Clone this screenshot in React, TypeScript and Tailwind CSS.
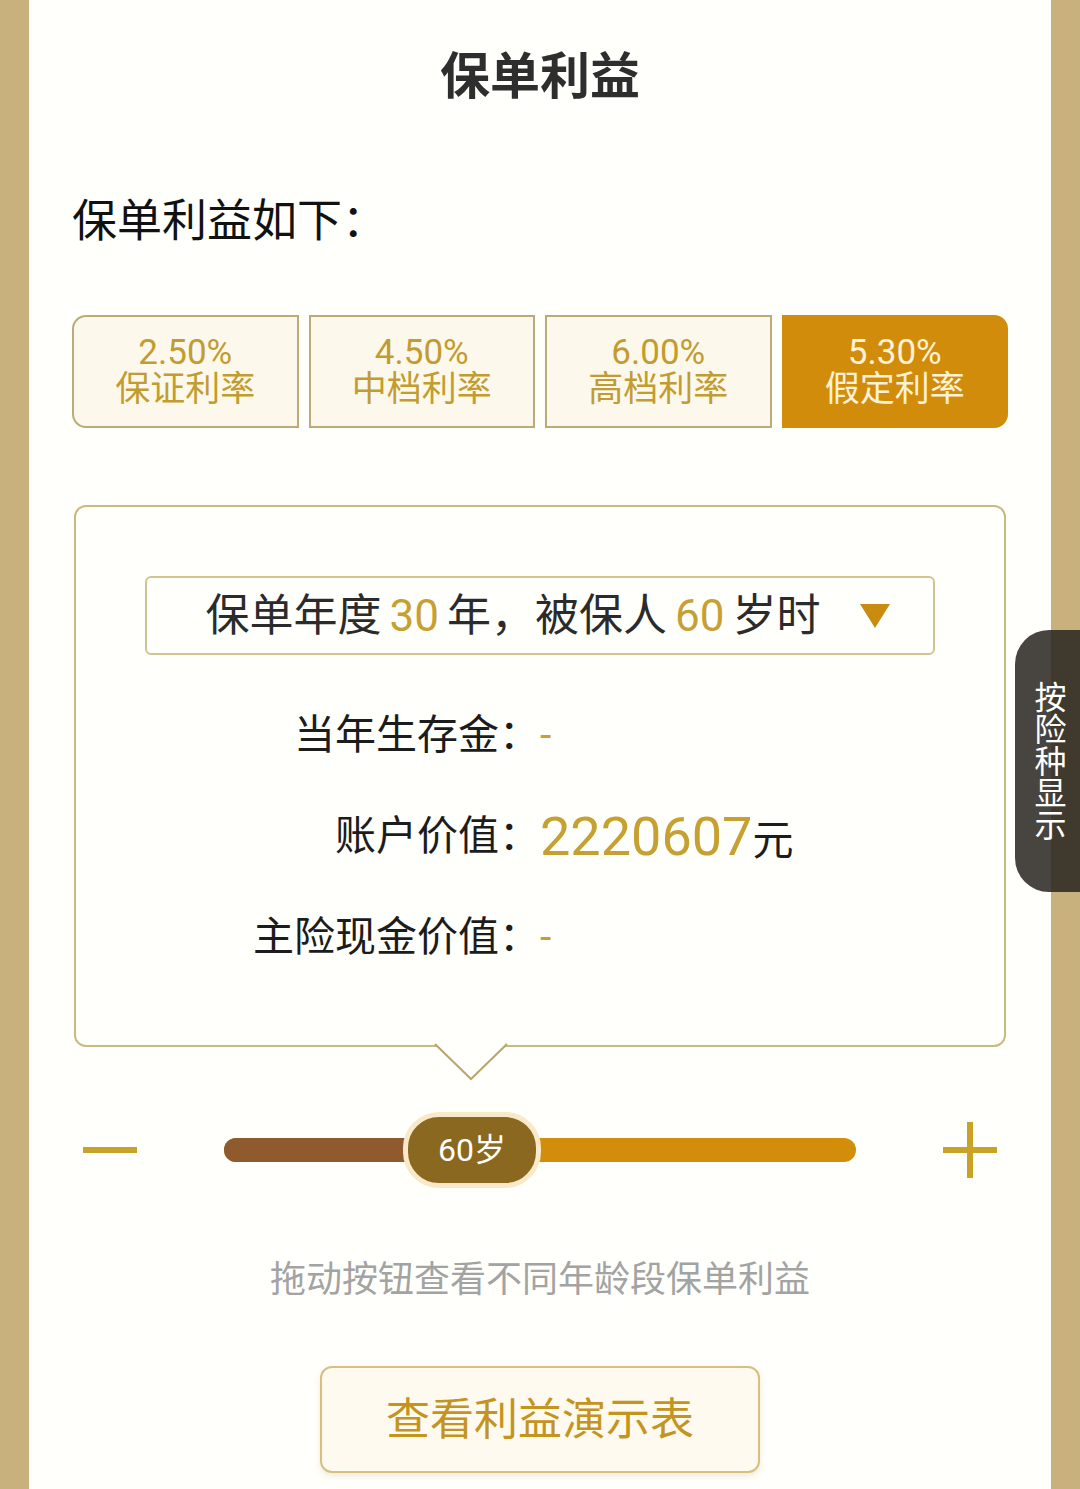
const rates = [
  { value: '2.50%', label: '保证利率' },
  { value: '4.50%', label: '中档利率' },
  { value: '6.00%', label: '高档利率' },
  { value: '5.30%', label: '假定利率' },
];

const font = "font-['Roboto','Noto_Sans_CJK_SC',sans-serif]";

function RateTabs({ active }: { active: number }) {
  return (
    <div className="mt-[65px] flex gap-[10px]">
      {rates.map((r, i) => {
        const on = i === active;
        const first = i === 0;
        const last = i === rates.length - 1;
        return (
          <div
            key={r.value}
            className={
              'flex h-[113px] flex-1 flex-col items-center justify-center border-2 ' +
              (on
                ? 'border-[#d18c0c] bg-[#d18c0c] text-[#fdf1d6] '
                : 'border-[#bcab78] bg-[#fdf8ec] text-[#c29c30] ') +
              (first ? 'rounded-l-[14px] ' : '') +
              (last ? 'rounded-r-[14px] ' : '')
            }
          >
            <span className="text-[35px] leading-[37px]">{r.value}</span>
            <span className="text-[35px] leading-[38px]">{r.label}</span>
          </div>
        );
      })}
    </div>
  );
}

function Row({ label, children }: { label: string; children: React.ReactNode }) {
  return (
    <div className="flex h-[101px] items-center">
      <div className="w-[464px] text-right text-[41px] text-[#1c1c1c]">{label}</div>
      <div className="flex items-baseline">{children}</div>
    </div>
  );
}

export default function App() {
  return (
    <div className={`relative h-[1489px] w-[1080px] overflow-hidden bg-[#c9b17d] ${font}`}>
      <div className="mx-[29px] h-full bg-[#fffffc] px-[43px]">
        <h1 className="pt-[47px] text-center text-[50px] font-bold leading-[60px] text-[#2e2e2e]">
          保单利益
        </h1>
        <p className="mt-[87px] text-[45px] leading-[56px] text-[#111]">保单利益如下：</p>

        <RateTabs active={3} />

        {/* info panel */}
        <div className="relative mx-[2px] mt-[77px] rounded-[12px] border-2 border-[#cbb982] pb-[57px] pt-[69px]">
          <div className="mx-[69px] flex h-[79px] items-center justify-center rounded-[6px] border-2 border-[#d2c393] pl-[16px] text-[44px] text-[#2b2b2b]">
            <span>保单年度</span>
            <span className="mx-[8px] text-[#c7a032]">30</span>
            <span>年，被保人</span>
            <span className="mx-[8px] text-[#c7a032]">60</span>
            <span>岁时</span>
            <svg className="ml-[40px]" width="30" height="24" viewBox="0 0 30 24">
              <polygon points="0,0 30,0 15,24" fill="#c98b10" />
            </svg>
          </div>

          <div className="mt-[30px]">
            <Row label="当年生存金：">
              <span className="text-[41px] text-[#c7a032]">-</span>
            </Row>
            <Row label="账户价值：">
              <span className="text-[54px] text-[#c7a032]">2220607</span>
              <span className="text-[41px] text-[#1c1c1c]">元</span>
            </Row>
            <Row label="主险现金价值：">
              <span className="text-[41px] text-[#c7a032]">-</span>
            </Row>
          </div>

          <svg
            className="absolute left-[358px] top-[calc(100%-2px)]"
            width="74"
            height="38"
            viewBox="0 0 74 38"
          >
            <polygon points="0,0 37,36 74,0" fill="#fffffc" />
            <polyline points="1,1 37,36 73,1" fill="none" stroke="#b9a56c" strokeWidth="2" />
          </svg>
        </div>

        {/* age slider */}
        <div className="mt-[58px] flex h-[90px] items-center">
          <div className="ml-[11px] h-[6px] w-[54px] bg-[#c9a227]" />
          <div className="relative ml-[87px] h-[24px] w-[632px] rounded-full bg-[#d28d0a]">
            <div className="h-full w-[248px] rounded-l-full bg-[#8f5a2d]" />
            <div className="absolute left-[179px] top-[-26px] flex h-[76px] w-[138px] items-center justify-center rounded-[36px] border-[5px] border-[#f9e9c8] bg-[#8b6820] text-[32px] text-white">
              60岁
            </div>
          </div>
          <div className="relative ml-[87px] h-[56px] w-[54px]">
            <div className="absolute left-0 top-[25px] h-[6px] w-[54px] bg-[#c9a227]" />
            <div className="absolute left-[24px] top-0 h-[56px] w-[6px] bg-[#c9a227]" />
          </div>
        </div>

        <p className="mt-[62px] text-center text-[36px] leading-[46px] text-[#a3a3a3]">
          拖动按钮查看不同年龄段保单利益
        </p>

        <div className="mt-[63px] flex justify-center">
          <div className="flex h-[107px] w-[440px] items-center justify-center rounded-[12px] border-2 border-[#d6bf80] bg-[#fffaef] text-[44px] text-[#c4951e] shadow-[0_3px_6px_rgba(200,170,100,0.25)]">
            查看利益演示表
          </div>
        </div>
      </div>

      {/* side tab */}
      <div className="absolute right-0 top-[630px] flex h-[262px] w-[65px] items-center justify-center rounded-l-[34px] bg-[#282420]/85 text-white">
        <span className="text-[32px] leading-[32px] tracking-[0px] [writing-mode:vertical-rl]">
          按险种显示
        </span>
      </div>
    </div>
  );
}
